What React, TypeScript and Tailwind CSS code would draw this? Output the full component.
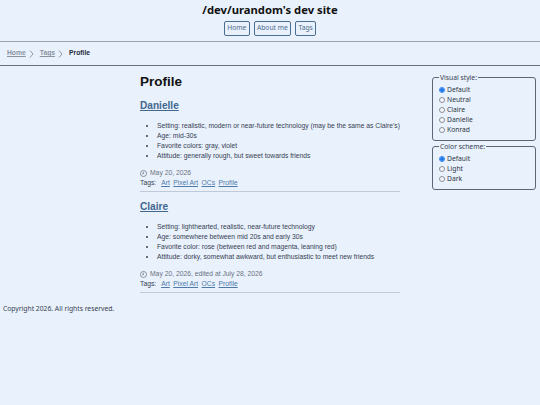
import { Fragment } from "react";

const styles = ["Default", "Neutral", "Claire", "Danielle", "Konrad"];
const schemes = ["Default", "Light", "Dark"];
const tags = ["Art", "Pixel Art", "OCs", "Profile"];

const posts = [
  {
    name: "Danielle",
    date: "May 20, 2026",
    facts: [
      "Setting: realistic, modern or near-future technology (may be the same as Claire's)",
      "Age: mid-30s",
      "Favorite colors: gray, violet",
      "Attitude: generally rough, but sweet towards friends",
    ],
  },
  {
    name: "Claire",
    date: "May 20, 2026, edited at July 28, 2026",
    facts: [
      "Setting: lighthearted, realistic, near-future technology",
      "Age: somewhere between mid 20s and early 30s",
      "Favorite color: rose (between red and magenta, leaning red)",
      "Attitude: dorky, somewhat awkward, but enthusiastic to meet new friends",
    ],
  },
];

function Chevron() {
  return (
    <svg width="5" height="8" viewBox="0 0 5 8" fill="none" stroke="#6b7280" strokeWidth="0.7">
      <path d="M1 0.5 L4 4 L1 7.5" />
    </svg>
  );
}

function ClockIcon() {
  return (
    <svg width="7" height="7" viewBox="0 0 12 12" fill="none" stroke="#4b5563" strokeWidth="1">
      <circle cx="6" cy="6" r="5.2" />
      <path d="M6 3 V6.3 H3.5" />
    </svg>
  );
}

function RadioGroup({ legend, options }: { legend: string; options: string[] }) {
  return (
    <fieldset className="mx-0 min-w-0 rounded-[3px] border border-[#5b6677] pb-[5px] pl-[6px] pr-[4px] pt-0">
      <legend className="px-[1px] text-[6.75px] leading-[9px] text-[#374151]">{legend}</legend>
      <div className="mt-[3px] flex flex-col">
        {options.map((option, i) => (
          <label key={option} className="flex h-[10px] items-center gap-[2px] text-[6.75px] text-[#2f3743]">
            <span
              className={
                i === 0
                  ? "flex h-[6px] w-[6px] items-center justify-center rounded-full border border-[#2f80ed] bg-white"
                  : "h-[6px] w-[6px] rounded-full border border-[#8a8f98] bg-[#f4f7fc]"
              }
            >
              {i === 0 && <span className="h-[4px] w-[4px] rounded-full bg-[#1a73e8]" />}
            </span>
            {option}
          </label>
        ))}
      </div>
    </fieldset>
  );
}

export default function App() {
  return (
    <div className="h-[405px] w-[540px] overflow-hidden bg-[#e9f1fd] font-['Noto_Sans',sans-serif] text-[#111827] antialiased">
      <header className="flex h-[42px] flex-col items-center border-b border-[#9aa3af] pt-[1px]">
        <h1 className="text-[11.25px] font-bold leading-[18px] text-[#111]">/dev/urandom's dev site</h1>
        <nav className="mt-[2px] flex gap-[4px]">
          {["Home", "About me", "Tags"].map((item) => (
            <a
              key={item}
              className="flex h-[15px] items-center rounded-[2px] border border-[#4d6f8f] px-[2.25px] text-[6.75px] text-[#4f6f8c]"
            >
              {item}
            </a>
          ))}
        </nav>
      </header>

      <div className="flex h-[24px] items-center gap-[3px] border-b border-[#6b7280] pl-[7px] font-['Liberation_Sans',sans-serif] text-[6.75px]">
        <a className="font-bold text-[#8a93a0] underline">Home</a>
        <Chevron />
        <a className="ml-[3px] font-bold text-[#8a93a0] underline">Tags</a>
        <Chevron />
        <span className="ml-[3px] font-bold text-[#1f2937]">Profile</span>
      </div>

      <div className="flex">
        <main className="ml-[140px] w-[260px] font-['Liberation_Sans',sans-serif]">
          <h2 className="mt-[7px] text-[13.5px] font-bold leading-[18px] text-[#111]">Profile</h2>
          {posts.map((post) => (
            <article key={post.name} className="border-b border-[#c2c9d6] pb-[3px]">
              <h3 className="mt-[8px] text-[10.125px] font-bold leading-[14px] text-[#41678f] underline">
                {post.name}
              </h3>
              <ul className="mt-[8px] list-disc pl-[17px] text-[6.75px] leading-[10px] text-[#374151]">
                {post.facts.map((fact) => (
                  <li key={fact}>{fact}</li>
                ))}
              </ul>
              <p className="mt-[7px] flex h-[10px] items-center gap-[3px] text-[6.75px] text-[#6b7280]">
                <ClockIcon />
                {post.date}
              </p>
              <p className="flex h-[10px] items-center text-[6.75px] text-[#374151]">
                Tags:
                {tags.map((tag, t) => (
                  <Fragment key={tag}>
                    <a className={(t === 0 ? "ml-[5px]" : "ml-[3.5px]") + " text-[#4d7aa8] underline"}>{tag}</a>
                  </Fragment>
                ))}
              </p>
            </article>
          ))}
        </main>

        <aside className="ml-[32px] mt-[7px] flex w-[104px] flex-col gap-[1px]">
          <RadioGroup legend="Visual style:" options={styles} />
          <RadioGroup legend="Color scheme:" options={schemes} />
        </aside>
      </div>

      <footer className="ml-[3px] mt-[11px] text-[6.75px] leading-[10px] text-[#374151]">
        Copyright 2026. All rights reserved.
      </footer>
    </div>
  );
}
